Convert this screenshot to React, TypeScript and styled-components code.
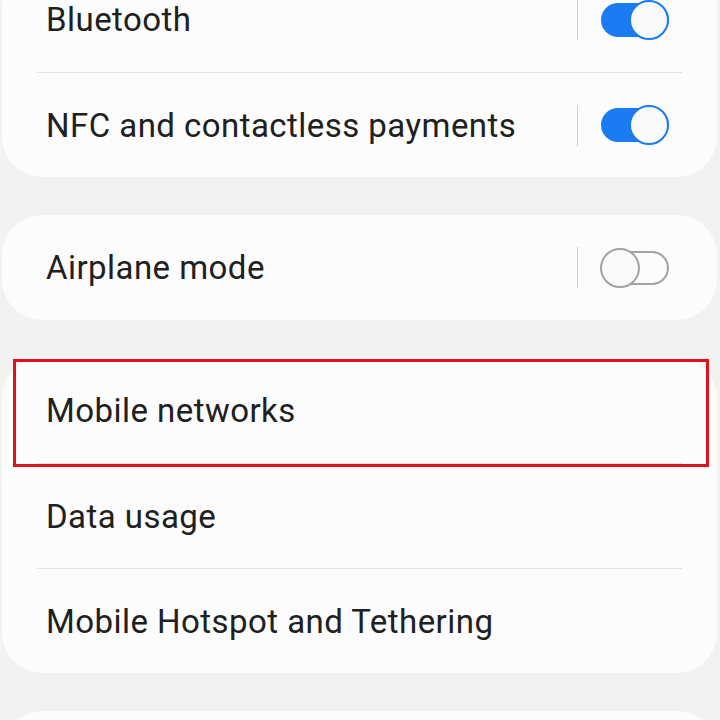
import React from 'react'
import styled, { createGlobalStyle } from 'styled-components'

const Global = createGlobalStyle`
  html, body {
    margin: 0;
    padding: 0;
    background: #f2f2f2;
    overflow: hidden;
  }
  body {
    font-family: Roboto, 'Noto Sans', sans-serif;
  }
`

const Page = styled.div`
  width: 720px;
  height: 720px;
  overflow: hidden;
  background: #f2f2f2;
`

const List = styled.div`
  display: flex;
  flex-direction: column;
  gap: 38px;
  margin-top: -33px;
  padding: 0 3px 0 2px;
`

const Card = styled.div`
  background: #fcfcfc;
  border-radius: 40px;
  display: flex;
  flex-direction: column;
`

const Row = styled.div<{ $divider?: boolean }>`
  position: relative;
  height: 105px;
  display: flex;
  align-items: center;
  box-sizing: border-box;
  border-top: ${p => (p.$divider ? '1px solid #e3e3e3' : 'none')};
  margin: 0 ${p => (p.$divider ? '35px' : '0')};
  padding-left: ${p => (p.$divider ? '9px' : '44px')};
  padding-right: ${p => (p.$divider ? '13px' : '48px')};
`

const Label = styled.span`
  flex: 1;
  font-size: 33px;
  color: #202020;
  letter-spacing: 0.45px;
`

const Sep = styled.div`
  width: 1px;
  height: 41px;
  background: #cfcfcf;
  margin-right: 23px;
`

const Track = styled.div<{ $on: boolean }>`
  position: relative;
  width: 68px;
  height: 34px;
  border-radius: 17px;
  box-sizing: border-box;
  background: ${p => (p.$on ? '#1b7cf2' : 'transparent')};
  border: ${p => (p.$on ? 'none' : '2px solid #a3a3a3')};
`

const Thumb = styled.div<{ $on: boolean }>`
  position: absolute;
  top: 50%;
  width: 40px;
  height: 40px;
  margin-top: -20px;
  border-radius: 50%;
  box-sizing: border-box;
  background: #fafafa;
  border: 2px solid ${p => (p.$on ? '#1b7cf2' : '#a3a3a3')};
  ${p => (p.$on ? 'right: 0;' : 'left: -3px;')}
`

const Highlight = styled.div`
  position: absolute;
  left: 11px;
  top: 1px;
  width: 696px;
  height: 108px;
  border: 3px solid #e0101c;
  box-sizing: border-box;
  pointer-events: none;
`

const Toggle = ({ on }: { on: boolean }) => (
  <>
    <Sep />
    <Track $on={on}>
      <Thumb $on={on} />
    </Track>
  </>
)

export default function App() {
  return (
    <Page>
      <Global />
      <List>
        <Card>
          <Row>
            <Label>Bluetooth</Label>
            <Toggle on />
          </Row>
          <Row $divider>
            <Label>NFC and contactless payments</Label>
            <Toggle on />
          </Row>
        </Card>
        <Card>
          <Row>
            <Label>Airplane mode</Label>
            <Toggle on={false} />
          </Row>
        </Card>
        <Card>
          <Row>
            <Label>Mobile networks</Label>
            <Highlight />
          </Row>
          <Row $divider>
            <Label>Data usage</Label>
          </Row>
          <Row $divider>
            <Label>Mobile Hotspot and Tethering</Label>
          </Row>
        </Card>
        <Card>
          <Row />
        </Card>
      </List>
    </Page>
  )
}
